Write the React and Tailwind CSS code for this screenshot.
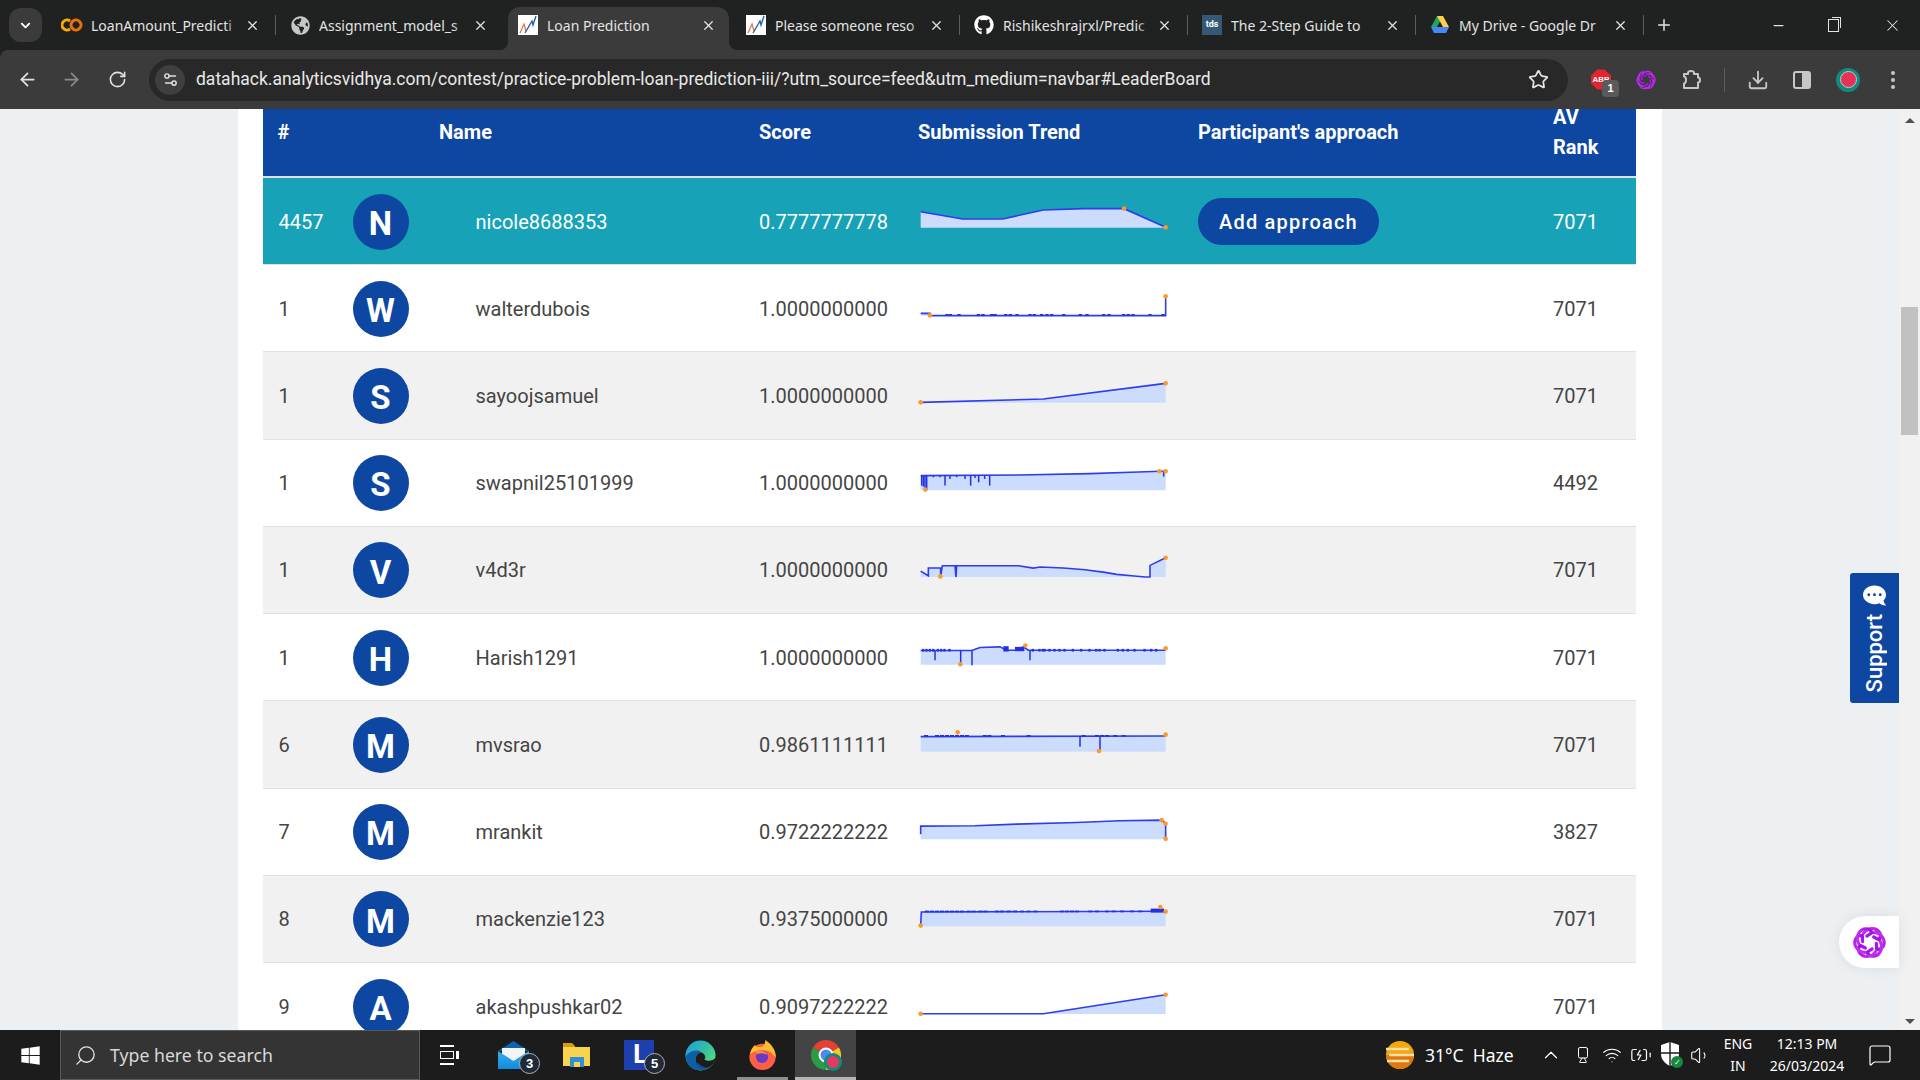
import { ArrowLeft, ArrowRight, RotateCw, Star, Download, X, Plus, Minus, Search, ChevronUp, ChevronDown, Wifi, Volume1, Settings2, MessageSquare, Video, BatteryCharging } from 'lucide-react';
import { FaGithub, FaWindows, FaCommentDots, FaGlobeAmericas } from 'react-icons/fa';

function ChartIcon() {
  return (
    <svg width="20" height="20" viewBox="0 0 20 20" className="shrink-0">
      <rect width="20" height="20" fill="#fff" />
      <path d="M2 18 L6 9 L8 16" fill="none" stroke="#e0713c" strokeWidth="1.2" />
      <path d="M7 18 L14 6 L15 10 L18 1" fill="none" stroke="#2563a8" strokeWidth="1.4" />
    </svg>
  );
}

function ColabIcon() {
  return (
    <svg width="22" height="20" viewBox="0 0 22 20" className="shrink-0">
      <path d="M9 6 A5 5 0 1 0 9 14" fill="none" stroke="#f9ab00" strokeWidth="3" />
      <path d="M12 6 A5 5 0 1 1 12 14 A5 5 0 0 1 12 6" fill="none" stroke="#e8710a" strokeWidth="3" />
    </svg>
  );
}

function TdsIcon() {
  return <div className="w-5 h-5 shrink-0 bg-[#355876] text-white text-[9px] font-bold flex items-center justify-center">tds</div>;
}

function DriveIcon() {
  return (
    <svg width="20" height="20" viewBox="0 0 20 20" className="shrink-0">
      <path d="M7 1 L13 1 L7 12 L1 12 Z" fill="#1fa463" />
      <path d="M13 1 L19 12 L13 12 L7 1 Z" fill="#ffd04b" />
      <path d="M4 18 L1 12 L19 12 L16 18 Z" fill="#4688f4" />
    </svg>
  );
}

const tabs = [
  { title: 'LoanAmount_Predicti', icon: <ColabIcon /> },
  { title: 'Assignment_model_s', icon: <FaGlobeAmericas size={19} className="shrink-0 text-[#c4c7c5]" /> },
  { title: 'Loan Prediction', icon: <ChartIcon />, active: true },
  { title: 'Please someone reso', icon: <ChartIcon /> },
  { title: 'Rishikeshrajrxl/Predic', icon: <FaGithub size={20} className="shrink-0 text-white" /> },
  { title: 'The 2-Step Guide to', icon: <TdsIcon /> },
  { title: 'My Drive - Google Dr', icon: <DriveIcon /> },
];

function Tab({ tab, sep }) {
  return (
    <div className="relative w-[228px] h-full shrink-0">
      <div className={`relative flex items-center w-[221px] h-[43px] mt-[7px] pb-[7px] pl-[10px] rounded-t-xl ${tab.active ? 'bg-[#3b3b3b]' : ''}`}>
        {tab.active && (
          <>
            <div className="absolute left-[-8px] bottom-0 w-2 h-2 bg-[#3b3b3b]"><div className="w-2 h-2 rounded-br-lg bg-[#202222]"></div></div>
            <div className="absolute right-[-8px] bottom-0 w-2 h-2 bg-[#3b3b3b]"><div className="w-2 h-2 rounded-bl-lg bg-[#202222]"></div></div>
          </>
        )}
        <div className="w-5 flex justify-center shrink-0">{tab.icon}</div>
        <div className="relative ml-[9px] w-[150px] overflow-hidden whitespace-nowrap text-[14px] text-[#e3e3e3] font-['Noto_Sans',sans-serif]">
          {tab.title}
          {!tab.active && <div className="absolute inset-y-0 right-0 w-4 bg-gradient-to-l from-[#202222] to-transparent"></div>}
        </div>
        <X size={15} strokeWidth={2} className="ml-[4px] shrink-0 text-[#e3e3e3]" />
      </div>
      {sep && <div className="absolute right-[4px] top-[15px] w-px h-[20px] bg-[#5c5c5c]"></div>}
    </div>
  );
}

function TopBars() {
  return (
    <>
      <div className="h-[50px] flex bg-[#202222] shrink-0">
        <div className="w-[33px] h-[34px] mt-2 ml-[9px] mr-[10px] rounded-xl bg-[#3b3b3b] flex items-center justify-center shrink-0">
          <ChevronDown size={15} strokeWidth={3} className="text-white" />
        </div>
        {tabs.map((tab, i) => (
          <Tab key={tab.title} tab={tab} sep={i !== 1 && i !== 2} />
        ))}
        <Plus size={18} strokeWidth={2} className="text-[#e3e3e3] mt-[16px] ml-[7px]" />
        <div className="flex-1 flex items-start justify-end">
          <div className="w-[48px] h-[50px] flex items-center justify-center"><Minus size={15} className="text-[#e3e3e3]" /></div>
          <div className="w-[62px] h-[50px] flex items-center justify-center">
            <div className="relative w-[11px] h-[13px] border border-[#e3e3e3]"><div className="absolute -top-[3px] -right-[3px] w-[9px] h-[11px] border-t border-r border-[#e3e3e3]"></div></div>
          </div>
          <div className="w-[56px] h-[50px] flex items-center justify-center"><X size={19} strokeWidth={1.3} className="text-[#e3e3e3]" /></div>
        </div>
      </div>
      <div className="h-[59px] bg-[#3b3b3b] flex items-center shrink-0 rounded-tl-lg">
        <ArrowLeft size={21} className="ml-[17px] text-[#e3e3e3]" />
        <ArrowRight size={21} className="ml-[23px] text-[#8b8b8b]" />
        <RotateCw size={19} className="ml-[26px] text-[#e3e3e3]" />
        <div className="ml-[22px] w-[1419px] h-[42px] rounded-full bg-[#282828] flex items-center">
          <div className="ml-[6px] w-[30px] h-[30px] rounded-full bg-[#3f3f3f] flex items-center justify-center">
            <Settings2 size={17} className="text-[#e3e3e3]" />
          </div>
          <div className="ml-[11px] flex-1 text-[17.5px] text-[#e8e8e8] whitespace-nowrap font-['Roboto',sans-serif]">
            datahack.analyticsvidhya.com/contest/practice-problem-loan-prediction-iii/?utm_source=feed&utm_medium=navbar#LeaderBoard
          </div>
          <Star size={21} className="mr-[19px] text-[#e3e3e3]" />
        </div>
        <div className="ml-[23px] relative w-5 h-[21px]">
          <svg width="20" height="21" viewBox="0 0 22 22"><path d="M7 0 H15 L22 7 V15 L15 22 H7 L0 15 V7 Z" fill="#e2252f" /></svg>
          <div className="absolute inset-0 flex items-center justify-center text-white text-[8px] font-bold font-['Liberation_Sans',sans-serif]">ABP</div>
          <div className="absolute left-[11px] top-[11px] w-[17px] h-[17px] rounded-[4px] bg-[#5a5a5a] text-white text-[11px] font-bold flex items-center justify-center font-['Liberation_Sans',sans-serif]">1</div>
        </div>
        <div className="ml-[25px]"><PurpleSwirl size={20} id="swirl-top" stroke={1.9} /></div>
        <svg width="22" height="22" viewBox="0 0 22 22" className="ml-[25px]">
          <path d="M3 5 H7 V4 a3 2 0 0 1 6 0 V5 H17 V8.5 a2 2.5 0 0 1 0 5 V19 H3 V14.5 a2 3.5 0 0 0 0 -7 Z" fill="none" stroke="#c7c7c7" strokeWidth="2" strokeLinejoin="round" />
        </svg>
        <div className="ml-[21px] w-px h-[24px] bg-[#5c5c5c]"></div>
        <Download size={22} className="ml-[22px] text-[#c7c7c7]" />
        <div className="ml-[24px] w-[18px] h-[18px] rounded-[3px] border-2 border-[#c7c7c7] flex justify-end"><div className="w-[7px] bg-[#c7c7c7]"></div></div>
        <div className="ml-[25px] w-6 h-6 rounded-full bg-[#128a7c] flex items-center justify-center">
          <div className="w-[17px] h-[17px] rounded-full bg-[#e8305a] border border-[#a8dcb0]"></div>
        </div>
        <div className="ml-[31px] flex flex-col gap-[3px]">
          <div className="w-1 h-1 rounded-full bg-[#c7c7c7]"></div>
          <div className="w-1 h-1 rounded-full bg-[#c7c7c7]"></div>
          <div className="w-1 h-1 rounded-full bg-[#c7c7c7]"></div>
        </div>
      </div>
    </>
  );
}

function PurpleSwirl({ size, id, stroke = 2.3 }) {
  return (
    <svg width={size} height={size} viewBox="0 0 24 24">
      <defs>
        <linearGradient id={id} x1="0" y1="0" x2="1" y2="1">
          <stop offset="0" stopColor="#cc33f0" />
          <stop offset="1" stopColor="#9a0fe6" />
        </linearGradient>
      </defs>
      <g fill="none" stroke={`url(#${id})`} strokeWidth={stroke} strokeLinecap="round" strokeLinejoin="round">
        {[0, 60, 120, 180, 240, 300].map((a) => (
          <path key={a} d="M7.5 5.5 C10 1 17 0.5 19.5 5 C20.5 7 20 8.5 19 10 L15 8" transform={`rotate(${a} 12 12)`} />
        ))}
      </g>
    </svg>
  );
}

// sparkline points are read off the reference, x/3 px wide
function Spark({ off, base, line, spikes = [], ticks = [], dots = [] }) {
  const px = (x) => x / 3 - 18;
  const py = (y) => y / 3 + off;
  const pts = line.map(([x, y]) => `${px(x)},${py(y)}`).join(' ');
  const first = line[0][0];
  const last = line[line.length - 1][0];
  const area = `${px(first)},${py(base)} ${pts} ${px(last)},${py(base)}`;
  return (
    <svg width="250" height="87" className="block overflow-visible">
      <polygon points={area} fill="#cbdcfc" />
      <polyline points={pts} fill="none" stroke="#2f3bee" strokeWidth="1.6" />
      {spikes.map(([x, a, b], i) => (
        <line key={i} x1={px(x)} x2={px(x)} y1={py(a)} y2={py(b)} stroke="#2430e8" strokeWidth="1.5" />
      ))}
      {ticks.map(([x, y, w, h], i) => (
        <rect key={i} x={px(x)} y={py(y)} width={w / 3} height={h / 3} fill="#2230e0" />
      ))}
      {dots.map(([x, y], i) => (
        <circle key={i} cx={px(x)} cy={py(y)} r="2.3" fill="#fb9a2c" />
      ))}
    </svg>
  );
}

const walterTicks = [136, 146, 172, 230, 244, 270, 280, 312, 326, 346, 385, 398, 420, 436, 450, 486, 536, 556, 606, 622, 666, 680, 694, 745, 784].map((x) => [x, 372, 10, 5]);
const swapnilSpikes = [[65, 75, 105], [70, 75, 108], [75, 75, 118], [80, 75, 118], [100, 75, 80], [120, 75, 80], [135, 75, 105], [150, 75, 85], [170, 75, 80], [195, 75, 85], [212, 75, 105], [225, 75, 82], [236, 75, 95], [254, 75, 85], [269, 75, 105], [791, 62, 78]];
const harishTicks = [66, 76, 86, 96, 110, 120, 130, 145, 395, 415, 425, 430, 445, 460, 475, 490, 515, 540, 565, 585, 595, 610, 650, 665, 680, 700, 730, 750, 765].map((x) => [x, 596, 7, 8]);
const mvsTicks = [72, 105, 120, 135, 150, 165, 180, 195, 248, 262, 303, 380, 545, 585, 600, 615, 640, 665].map((x) => [x, 105, 12, 5]);
const mackTicks = [75, 90, 105, 120, 135, 150, 165, 180, 200, 215, 235, 250, 285, 300, 320, 340, 360, 380, 400, 480, 495, 510, 525, 565, 585, 615, 635, 660, 690, 715].map((x) => [x, 630, 12, 5]);

const rows = [
  { rank: 4457, letter: 'N', name: 'nicole8688353', score: '0.7777777778', av: 7071, highlight: true, spark: { off: 12, base: 113, line: [[62, 65], [188, 87], [308, 87], [430, 60], [552, 56], [672, 56], [797, 112]], dots: [[672, 56], [797, 112]] } },
  { rank: 1, letter: 'W', name: 'walterdubois', score: '1.0000000000', av: 7071, spark: { off: -75, base: 377, line: [[62, 370], [90, 370], [90, 377], [797, 377], [797, 319]], ticks: walterTicks, dots: [[90, 376], [797, 319]] } },
  { rank: 1, letter: 'S', name: 'sayoojsamuel', score: '1.0000000000', av: 7071, spark: { off: -162, base: 638, line: [[62, 637], [430, 627], [797, 580]], dots: [[62, 637], [797, 580]] } },
  { rank: 1, letter: 'S', name: 'swapnil25101999', score: '1.0000000000', av: 4492, spark: { off: 10.6, base: 119, line: [[62, 75], [355, 73], [570, 69], [715, 64], [780, 62], [797, 62]], spikes: swapnilSpikes, dots: [[76, 117], [778, 62], [797, 62]] } },
  { rank: 1, letter: 'V', name: 'v4d3r', score: '1.0000000000', av: 7071, spark: { off: -76.6, base: 380, line: [[62, 362], [85, 376], [85, 353], [122, 353], [122, 378], [127, 346], [165, 346], [168, 380], [170, 346], [355, 346], [400, 353], [420, 350], [490, 353], [555, 358], [615, 366], [650, 372], [695, 376], [735, 380], [750, 380], [750, 345], [797, 322]], dots: [[121, 378], [797, 322]] } },
  { rank: 1, letter: 'H', name: 'Harish1291', score: '1.0000000000', av: 7071, spark: { off: -163.8, base: 644, line: [[62, 601], [215, 601], [240, 592], [300, 590], [320, 600], [345, 600], [370, 590], [385, 600], [797, 600]], spikes: [[105, 601, 630], [182, 601, 642], [216, 601, 645], [390, 600, 630]], ticks: [...harishTicks, [310, 588, 16, 16], [345, 590, 28, 13]], dots: [[376, 586], [181, 642], [797, 594]] } },
  { rank: 6, letter: 'M', name: 'mvsrao', score: '0.9861111111', av: 7071, spark: { off: -1, base: 155, line: [[62, 110], [797, 108]], spikes: [[540, 108, 140], [600, 108, 153]], ticks: mvsTicks, dots: [[173, 97], [597, 153], [797, 104]] } },
  { rank: 7, letter: 'M', name: 'mrankit', score: '0.9722222222', av: 3827, spark: { off: -88.2, base: 415, line: [[62, 400], [62, 376], [225, 375], [350, 370], [530, 365], [660, 360], [785, 358], [797, 368], [797, 414]], dots: [[785, 358], [797, 369], [797, 414]] } },
  { rank: 8, letter: 'M', name: 'mackenzie123', score: '0.9375000000', av: 7071, spark: { off: -175.4, base: 677, line: [[62, 675], [64, 634], [797, 632]], ticks: [...mackTicks, [752, 624, 40, 12]], dots: [[62, 675], [781, 619], [797, 633]] } },
  { rank: 9, letter: 'A', name: 'akashpushkar02', score: '0.9097222222', av: 7071, spark: { off: -262.6, base: 941, line: [[62, 940], [430, 940], [797, 883]], dots: [[62, 940], [797, 883]] } },
];

function Row({ row, index }) {
  const bg = row.highlight ? 'bg-[#17a2b8] text-white h-[87px]' : index % 2 === 0 ? 'bg-[#f1f1f1] text-[#454545] h-[87.25px]' : 'bg-white text-[#454545] h-[87.25px]';
  return (
    <div className={`grid grid-cols-[90px_406.5px_159px_280px_355px_1fr] items-center border-b border-[#dee2e6] text-[20px] ${bg}`}>
      <div className="pl-[16px]">{row.rank}</div>
      <div className="flex items-center">
        <div className="w-14 h-14 pt-1 rounded-full bg-[#0d47a1] text-white text-[33px] font-bold flex items-center justify-center shrink-0">{row.letter}</div>
        <div className="ml-[67px]">{row.name}</div>
      </div>
      <div>{row.score}</div>
      <div className="self-start"><Spark {...row.spark} /></div>
      <div>
        {row.highlight && (
          <button className="h-[47px] px-[21px] rounded-full bg-[#0d47a1] text-white font-medium tracking-[1.2px]">Add approach</button>
        )}
      </div>
      <div>{row.av}</div>
    </div>
  );
}

function Leaderboard() {
  return (
    <div className="w-[1424px] mx-auto h-full bg-white pl-[25px] pr-[26px] overflow-hidden">
      <div className="grid grid-cols-[90px_406.5px_159px_280px_355px_1fr] grid-rows-[45px] items-center h-[69px] pb-[22px] border-b-2 border-[#dee2e6] bg-[#0d47a1] text-white text-[20px] font-bold leading-[30px]">
        <div className="pl-[15px]">#</div>
        <div className="pl-[86.5px]">Name</div>
        <div>Score</div>
        <div>Submission Trend</div>
        <div>Participant's approach</div>
        <div className="w-[60px]">AV Rank</div>
      </div>
      {rows.map((row, i) => (
        <Row key={row.name} row={row} index={i} />
      ))}
    </div>
  );
}

function Badge({ n, className }) {
  return (
    <div className={`absolute w-[21px] h-[21px] rounded-full bg-[#1f2a38] border border-[#b0b0b0] text-white text-[13px] font-bold leading-[19px] text-center font-['Liberation_Sans',sans-serif] ${className}`}>{n}</div>
  );
}

function Taskbar() {
  return (
    <div className="relative h-[50px] bg-[#1c1c1c] flex items-center shrink-0 text-white font-['Noto_Sans',sans-serif]">
      <div className="w-[60px] flex justify-center"><FaWindows size={21} /></div>
      <div className="w-[360px] h-full bg-[#343434] border border-[#5a5a5a] flex items-center">
        <Search size={23} strokeWidth={1.4} className="ml-[13px] -scale-x-100 text-[#e3e3e3]" />
        <div className="ml-[13px] text-[17.7px] text-[#d8d8d8]">Type here to search</div>
      </div>
      <div className="ml-[20px] w-[20px] h-[20px] flex flex-col justify-between">
        <div className="h-[2px] w-[14px] bg-white"></div>
        <div className="flex gap-[2px]"><div className="w-[14px] h-[8px] border border-white"></div><div className="w-[3px] h-[8px] bg-white"></div></div>
        <div className="h-[2px] w-[14px] bg-white"></div>
      </div>
      {/* mail */}
      <div className="relative ml-[38px] w-[31px] h-[30px]">
        <svg width="31" height="30" viewBox="0 0 31 30">
          <defs>
            <linearGradient id="mail-body" x1="0" y1="0" x2="0" y2="1">
              <stop offset="0" stopColor="#34b0f0" />
              <stop offset="1" stopColor="#1489dc" />
            </linearGradient>
          </defs>
          <path d="M0 11 L15.5 1 L31 11 Z" fill="#0f63b0" />
          <path d="M4 8 H27 V18 L15.5 24 L4 18 Z" fill="#f2f5f8" />
          <path d="M0 11 L15.5 21 L31 11 V29 H0 Z" fill="url(#mail-body)" />
        </svg>
        <Badge n="3" className="left-[21px] top-[13px]" />
      </div>
      {/* folder */}
      <div className="ml-[32px] w-[30px] h-[30px]">
        <svg width="30" height="30" viewBox="0 0 30 30">
          <path d="M2 3 H11 L14 6 V9 H2 Z" fill="#d89c12" />
          <rect x="2" y="7" width="27" height="19" fill="#f7d34e" />
          <rect x="9" y="17" width="14" height="10" fill="#2f8fd8" />
          <rect x="13" y="22" width="6" height="5" fill="#f7d34e" />
        </svg>
      </div>
      {/* L */}
      <div className="relative ml-[33px] w-[30px] h-[30px] bg-[#1e3fae] text-white font-bold text-[27px] leading-[28px] pl-[9px] font-['Liberation_Sans',sans-serif]">
        L
        <Badge n="5" className="left-[20px] top-[13px]" />
      </div>
      {/* edge */}
      <div className="ml-[31px] w-[31px] h-[31px]">
        <svg width="31" height="31" viewBox="0 0 32 32">
          <defs>
            <linearGradient id="edge-top" x1="0" y1="0" x2="1" y2="0.7">
              <stop offset="0" stopColor="#1b9de2" />
              <stop offset="0.6" stopColor="#35c1a0" />
              <stop offset="1" stopColor="#5fdc7e" />
            </linearGradient>
          </defs>
          <circle cx="16" cy="16" r="15.5" fill="url(#edge-top)" />
          <path d="M1 17 C4 11 13 9 17 13 C14 13 11 16 11 20 C11 26 18 31 25 28 C20 33 2 34 1 17Z" fill="#0f5fa8" />
          <path d="M17 13 C21 15 22 18 20 20 C23 22 29 22 31.5 18 C31.5 21 29 26 25 28 C18 31 11 26 11 20 C11 16 14 13 17 13Z" fill="#1c1c1c" />
          <path d="M14 24 C17 28 22 29 25 28 C20 32 13 30 11 24Z" fill="#14508f" />
        </svg>
      </div>
      {/* firefox */}
      <div className="ml-[32px] w-[29px] h-[30px]">
        <svg width="29" height="30" viewBox="0 0 30 32">
          <circle cx="15" cy="18" r="14" fill="#ff5f46" />
          <path d="M2 15 C3 8 6 7 7 5 C8 8 12 8 15 7 C17 6 18 3 18 0 C24 4 30 11 29 19 C24 10 12 8 2 15Z" fill="#ffbd2e" />
          <circle cx="14.5" cy="18" r="6.5" fill="#6a38c4" />
          <path d="M8 12 C12 10 19 12 20 16 C16 13 12 14 9 15Z" fill="#ff8f3a" />
        </svg>
      </div>
      {/* chrome, active */}
      <div className="relative ml-[18px] w-[61px] h-full bg-[#444444] flex items-center justify-center">
        <svg width="32" height="32" viewBox="0 0 32 32">
          <path d="M16 16 L3 8.5 A15 15 0 0 1 29 8.5 Z" fill="#e34133" />
          <path d="M16 16 L29 8.5 A15 15 0 0 1 16 31 Z" fill="#f9c32b" />
          <path d="M16 16 L16 31 A15 15 0 0 1 3 8.5 Z" fill="#2c9a47" />
          <circle cx="16" cy="16" r="6.5" fill="#4a8bf0" stroke="#fff" strokeWidth="2" />
          <circle cx="23" cy="23" r="9" fill="#128a7c" />
          <circle cx="23" cy="23" r="6" fill="#e5395f" />
        </svg>
        <div className="absolute inset-x-0 bottom-0 h-[3px] bg-[#b5b5b5]"></div>
      </div>
      <div className="flex-1"></div>
      {/* weather */}
      <svg width="30" height="30" viewBox="0 0 30 30">
        <circle cx="15" cy="15" r="14" fill="#f5a70e" />
        <path d="M15 15 m-14 0 a14 14 0 0 0 28 0Z" fill="#e0780e" />
        <path d="M1 9 H24 M4 15 H29 M2 21 H24" stroke="#f3dfae" strokeWidth="2.5" />
      </svg>
      <div className="ml-[10px] text-[17.5px] w-[94px] whitespace-nowrap">31°C&nbsp; Haze</div>
      <ChevronUp size={22} strokeWidth={1.3} className="ml-[21px]" />
      <Video size={18} strokeWidth={1.3} className="ml-[12px] rotate-90" />
      <Wifi size={20} strokeWidth={1.3} className="ml-[10px]" />
      <BatteryCharging size={22} strokeWidth={1.3} className="ml-[8px]" />
      {/* defender shield */}
      <div className="relative ml-[8px] w-5 h-[26px]">
        <svg width="20" height="24" viewBox="0 0 20 24"><path d="M10 0 L19 3 V12 C19 18 14 22 10 24 C6 22 1 18 1 12 V3 Z" fill="#fff" /><path d="M10 0 V24 M1 11 H19" stroke="#1c1c1c" strokeWidth="1.4" /></svg>
        <div className="absolute right-[-3px] bottom-0 w-[12px] h-[12px] rounded-full bg-[#16893f] text-white text-[8px] leading-[12px] text-center">✓</div>
      </div>
      <Volume1 size={21} strokeWidth={1.2} className="ml-[10px]" />
      <div className="ml-[11px] w-[32px] text-center text-[14px] leading-[22px]">
        <div>ENG</div>
        <div>IN</div>
      </div>
      <div className="ml-[13px] w-[80px] text-center text-[14px] leading-[22px]">
        <div>12:13 PM</div>
        <div>26/03/2024</div>
      </div>
      <MessageSquare size={24} strokeWidth={1.2} className="ml-[21px] mr-[28px]" />
      <div className="absolute left-[737px] bottom-0 w-[51px] h-[3px] bg-[#8f8f8f]"></div>
    </div>
  );
}

export default function App() {
  return (
    <div className="relative flex flex-col w-[1920px] h-[1080px] overflow-hidden bg-[#202222] font-['Roboto',sans-serif]">
      <TopBars />
      <div className="relative flex flex-1 min-h-0 bg-[#ecf0f3]">
        <main className="flex-1 min-w-0 overflow-hidden">
          <Leaderboard />
        </main>
        {/* scrollbar */}
        <div className="w-[21px] bg-[#f1f1f1] relative shrink-0">
          <div className="absolute left-[6px] top-[9px] w-0 h-0 border-x-[5px] border-x-transparent border-b-[5px] border-b-[#505050]"></div>
          <div className="absolute left-[2px] right-[2px] top-[198px] h-[128px] bg-[#c1c1c1]"></div>
          <div className="absolute left-[6px] bottom-[6px] w-0 h-0 border-x-[5px] border-x-transparent border-t-[5px] border-t-[#505050]"></div>
        </div>
        {/* support tab */}
        <div className="absolute right-[21px] top-[464px] w-[49px] h-[130px] bg-[#0d47a1] rounded-l-[3px] flex flex-col items-center justify-between pt-[11px] pb-[11px] text-white">
          <FaCommentDots size={23} className="-scale-x-100" />
          <div className="[writing-mode:vertical-rl] rotate-180 text-[22px] font-medium leading-none">Support</div>
        </div>
        {/* floating chat bubble */}
        <div className="absolute right-[21px] top-[807px] w-[60px] h-[52px] bg-white rounded-l-full shadow-[0_0_14px_rgba(0,0,0,0.08)] flex items-center justify-center">
          <PurpleSwirl size={33} id="swirl-float" />
        </div>
      </div>
      <Taskbar />
    </div>
  );
}
